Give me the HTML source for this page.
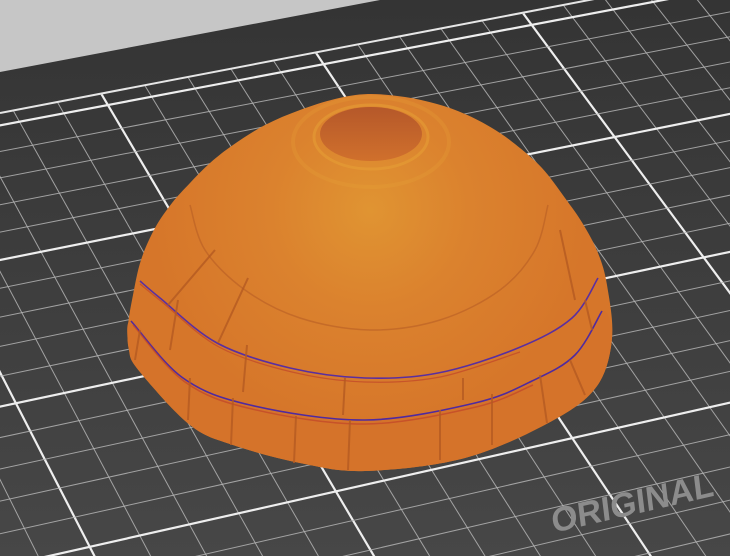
<!DOCTYPE html>
<html><head><meta charset="utf-8"><style>
html,body{margin:0;padding:0;width:730px;height:556px;overflow:hidden;background:#c6c6c6}
svg{display:block}
</style></head><body>
<svg id="s" width="730" height="556" viewBox="0 0 730 556" xmlns="http://www.w3.org/2000/svg" style="overflow:hidden">
<defs>
<linearGradient id="bed" x1="0" y1="0" x2="0" y2="1">
<stop offset="0" stop-color="#343434"/><stop offset="1" stop-color="#474747"/>
</linearGradient>
<radialGradient id="hl" cx="370" cy="210" r="220" gradientUnits="userSpaceOnUse">
<stop offset="0" stop-color="#e09432"/><stop offset="0.45" stop-color="#db822e"/><stop offset="1" stop-color="#d6762a"/>
</radialGradient>
<linearGradient id="hole" x1="0" y1="0" x2="0" y2="1">
<stop offset="0" stop-color="#b5582a"/><stop offset="1" stop-color="#d0702c"/>
</linearGradient>
<clipPath id="bedclip"><polygon points="0,114 730,-26 730,556 0,556"/></clipPath>
<clipPath id="all"><rect width="730" height="556"/></clipPath>
</defs>
<g clip-path="url(#all)">
<rect width="730" height="556" fill="#c6c6c6"/>
<polygon points="0,72 380,0 730,0 730,556 0,556" fill="url(#bed)"/>
<g id="grid" clip-path="url(#bedclip)"></g>
<line x1="0" y1="113" x2="730" y2="-27" stroke="#e6e6e6" stroke-width="2"/>
<text x="0" y="0" transform="translate(553,533) rotate(-13) skewX(-6)" font-family="Liberation Sans, sans-serif" font-weight="bold" font-size="34" fill="#8c8c8c">ORIGINAL</text>
<g id="dome"></g>
</g>
</svg>
<script>
(function(){
var NS="http://www.w3.org/2000/svg";
function el(t,a,p){var e=document.createElementNS(NS,t);for(var k in a)e.setAttribute(k,a[k]);p.appendChild(e);return e;}
var P=[[178.3,224.3],[614.6,137],[799.5,387],[335.9,491.4]];
var x0=P[0][0],y0=P[0][1],x1=P[1][0],y1=P[1][1],x2=P[2][0],y2=P[2][1],x3=P[3][0],y3=P[3][1];
var dx1=x1-x2,dx2=x3-x2,dy1=y1-y2,dy2=y3-y2,sx=x0-x1+x2-x3,sy=y0-y1+y2-y3;
var den=dx1*dy2-dx2*dy1;
var g=(sx*dy2-dx2*sy)/den,h=(dx1*sy-sx*dy1)/den;
var a=x1-x0+g*x1,b=x3-x0+h*x3,c=x0,d=y1-y0+g*y1,e=y3-y0+h*y3,f=y0;
function T(u,v){u/=2;v/=2;var w=g*u+h*v+1;return[(a*u+b*v+c)/w,(d*u+e*v+f)/w];}
var G=document.getElementById('grid');
function ln(p,q,maj){el('line',{x1:p[0].toFixed(1),y1:p[1].toFixed(1),x2:q[0].toFixed(1),y2:q[1].toFixed(1),stroke:maj?'#eeeeee':'#b4b4b4','stroke-width':maj?2.2:1,'stroke-opacity':maj?1:0.85},G);}
for(var i=-40;i<=40;i++){var u=i*0.2;var maj=(i%5===0);ln(T(u,-3.5),T(u,4),maj);}
for(var j=-20;j<=25;j++){var v=j*0.2;var maj=(j%5===0);ln(T(-8,v),T(6,v),maj);}
var D=document.getElementById('dome');
function cr(pts,closed){var s='M'+pts[0].join(',');var n=pts.length;
for(var i=0;i<(closed?n:n-1);i++){var p0=pts[(i-1+n)%n],p1=pts[i],p2=pts[(i+1)%n],p3=pts[(i+2)%n];
if(!closed){if(i===0)p0=p1;if(i+2>=n)p3=p2;}
var c1=[p1[0]+(p2[0]-p0[0])/6,p1[1]+(p2[1]-p0[1])/6],c2=[p2[0]-(p3[0]-p1[0])/6,p2[1]-(p3[1]-p1[1])/6];
s+=' C'+c1[0].toFixed(1)+','+c1[1].toFixed(1)+' '+c2[0].toFixed(1)+','+c2[1].toFixed(1)+' '+p2[0]+','+p2[1];}
return s+(closed?'Z':'');}
var out=[[128,326],[133,295],[141,260],[155,228],[172,203],[190,183],[210,163],[233,145],[265,125],[300,110],[335,99],[368,94],[405,97],[437,104],[465,114],[492,128],[515,144],[542,168],[565,198],[583,224],[598,253],[607,285],[612,338],[597,386],[552,421],[465,458],[365,471],[300,463],[233,445],[190,425],[140,372],[129,350]];
el('path',{d:cr(out,true),fill:'url(#hl)'},D);
var low=[[133,321],[183,378],[250,405],[365,420],[475,403],[532,381],[575,355],[602,311],[612,338],[597,386],[552,421],[465,458],[365,471],[300,463],[233,445],[190,425],[140,372],[129,350]];
el('path',{d:cr(low,true),fill:'#d5732a'},D);
el('path',{d:cr([[190,205],[205,250],[245,290],[300,318],[370,330],[440,320],[500,290],[535,250],[548,205]],false),fill:'none',stroke:'#b85e24','stroke-width':1.5,'stroke-opacity':0.6},D);
el('path',{d:cr([[140,281],[160,298],[217,343],[290,368],[365,378],[438,373],[518,348],[572,318],[598,278]],false),fill:'none',stroke:'#5a2fa0','stroke-width':1.6},D);
el('path',{d:cr([[140,284],[162,302],[219,347],[292,372],[365,382],[440,377],[520,352]],false),fill:'none',stroke:'#c0452a','stroke-width':1.2,'stroke-opacity':0.7},D);
el('path',{d:cr([[131,321],[183,378],[250,405],[365,420],[475,403],[532,381],[575,355],[602,311]],false),fill:'none',stroke:'#4f2aa0','stroke-width':1.6},D);
el('path',{d:cr([[133,325],[185,382],[252,409],[365,424],[476,407],[533,385]],false),fill:'none',stroke:'#c0452a','stroke-width':1.5,'stroke-opacity':0.7},D);
var pl=[[[215,250],[168,305]],[[248,278],[218,343]],[[178,300],[170,350]],[[190,378],[188,420]],[[233,398],[231,445]],[[296,416],[294,463]],[[350,420],[348,470]],[[440,410],[440,460]],[[492,394],[492,445]],[[540,375],[547,423]],[[570,360],[585,395]],[[585,300],[592,330]],[[247,345],[243,392]],[[345,378],[343,415]],[[463,378],[463,400]],[[560,230],[575,300]],[[140,330],[135,360]]];
pl.forEach(function(p){el('line',{x1:p[0][0],y1:p[0][1],x2:p[1][0],y2:p[1][1],stroke:'#b45a22','stroke-width':2,'stroke-opacity':0.8},D);});
el('ellipse',{cx:371,cy:134,rx:51,ry:27,fill:'url(#hole)'},D);
el('ellipse',{cx:371,cy:137,rx:57,ry:32,fill:'none',stroke:'#e8a236','stroke-width':3,'stroke-opacity':0.5},D);
el('ellipse',{cx:371,cy:142,rx:78,ry:45,fill:'none',stroke:'#e8a236','stroke-width':4,'stroke-opacity':0.25},D);
})();
</script>
</body></html>
